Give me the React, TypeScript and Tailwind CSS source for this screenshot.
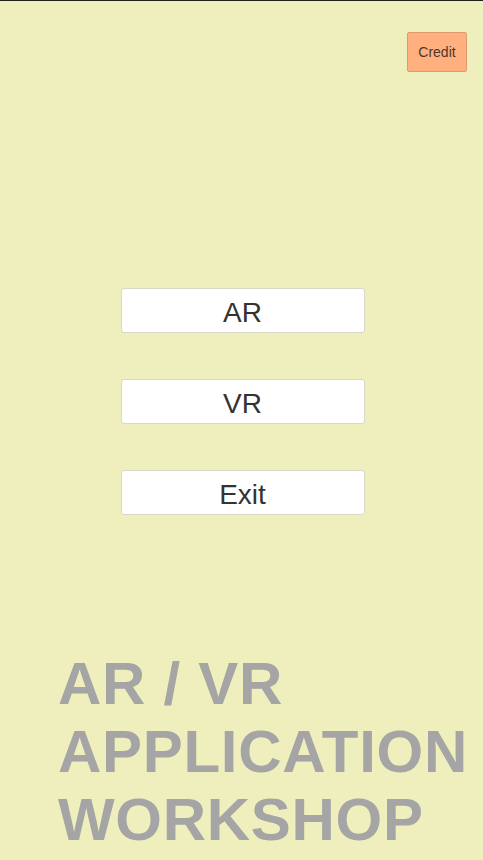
export default function App() {
  const items = ["AR", "VR", "Exit"];
  return (
    <div className="h-[860px] w-full overflow-hidden bg-[#efefbe] flex flex-col font-['Liberation_Sans',Arial,sans-serif]">
      <div className="h-px bg-[#1e1e1a]" />

      {/* top bar */}
      <div className="flex justify-end pt-[31px] pr-[16px]">
        <button className="w-[60px] h-[40px] rounded-[2px] border border-[#dc9a6e] bg-[#ffb07e] text-[14px] text-[#4a372b] flex items-center justify-center">
          Credit
        </button>
      </div>

      {/* menu */}
      <div className="mt-[216px] flex flex-col items-center gap-[46px] pl-[2px]">
        {items.map((label) => (
          <button
            key={label}
            className="w-[244px] h-[45px] pt-[5px] rounded-[3px] border border-[#d8d8c8] bg-white text-[28px] text-[#333333] flex items-center justify-center leading-none"
          >
            {label}
          </button>
        ))}
      </div>

      {/* title */}
      <div className="mt-[135px] pl-[58px] text-[60px] leading-[68px] tracking-[0.7px] font-bold text-[#a5a5a5] whitespace-nowrap">
        <div>AR / VR</div>
        <div>APPLICATION</div>
        <div>WORKSHOP</div>
      </div>
    </div>
  );
}
